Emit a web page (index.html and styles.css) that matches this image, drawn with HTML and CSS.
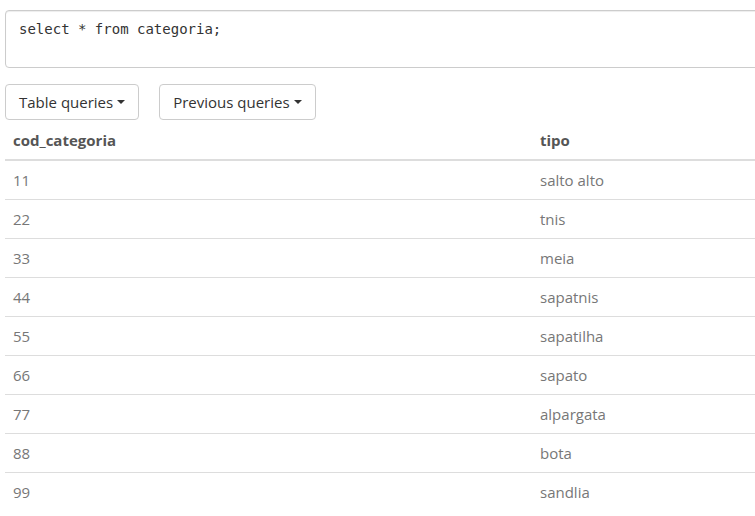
FILE: index.html
```html
<!DOCTYPE html>
<html>
<head>
<meta charset="utf-8">
<link rel="stylesheet" href="styles.css">
</head>
<body>
<div class="page">
  <div class="editor">select * from categoria;</div>
  <div class="toolbar">
    <button class="btn">Table queries <span class="caret"></span></button>
    <button class="btn">Previous queries <span class="caret"></span></button>
  </div>
  <table class="results">
    <thead>
      <tr><th class="c1">cod_categoria</th><th>tipo</th></tr>
    </thead>
    <tbody>
      <tr><td>11</td><td>salto alto</td></tr>
      <tr><td>22</td><td>tnis</td></tr>
      <tr><td>33</td><td>meia</td></tr>
      <tr><td>44</td><td>sapatnis</td></tr>
      <tr><td>55</td><td>sapatilha</td></tr>
      <tr><td>66</td><td>sapato</td></tr>
      <tr><td>77</td><td>alpargata</td></tr>
      <tr><td>88</td><td>bota</td></tr>
      <tr><td>99</td><td>sandlia</td></tr>
    </tbody>
  </table>
</div>
</body>
</html>
```
FILE: styles.css
```css
html, body {
  margin: 0;
  padding: 0;
  background: #fff;
  overflow: hidden;
}
.page {
  padding: 10px 0 0 5px;
  width: 800px;
  font-family: "Open Sans", "Noto Sans", sans-serif;
  font-size: 15px;
}
.editor {
  box-sizing: border-box;
  height: 58px;
  border: 1px solid #ccc;
  border-radius: 4px;
  padding: 8px 13px;
  font-family: "DejaVu Sans Mono", monospace;
  font-size: 14px;
  line-height: 20px;
  color: #333;
  box-shadow: inset 0 1px 1px rgba(0,0,0,0.075);
}
.toolbar {
  display: flex;
  gap: 20px;
  margin-top: 16px;
  margin-bottom: 1px;
}
.btn {
  box-sizing: border-box;
  height: 36px;
  padding: 6px 13px;
  border: 1px solid #ccc;
  border-radius: 4px;
  background: #fff;
  font-family: inherit;
  font-size: 15px;
  line-height: 22px;
  color: #333;
  display: flex;
  align-items: center;
}
.caret {
  display: inline-block;
  width: 0;
  height: 0;
  margin-left: 4px;
  border-top: 4px solid #333;
  border-left: 4px solid transparent;
  border-right: 4px solid transparent;
}
.results {
  border-collapse: collapse;
  width: 770px;
  color: #777;
}
.results th, .results td {
  text-align: left;
  padding: 8px;
  line-height: 22px;
  font-size: 15px;
}
.results th {
  color: #555;
  font-weight: 700;
  border-bottom: 2px solid #ddd;
}
.results th.c1 {
  width: 511px;
}
.results td {
  border-top: 1px solid #ddd;
}
.results tbody tr:first-child td {
  border-top: 0;
}
```
